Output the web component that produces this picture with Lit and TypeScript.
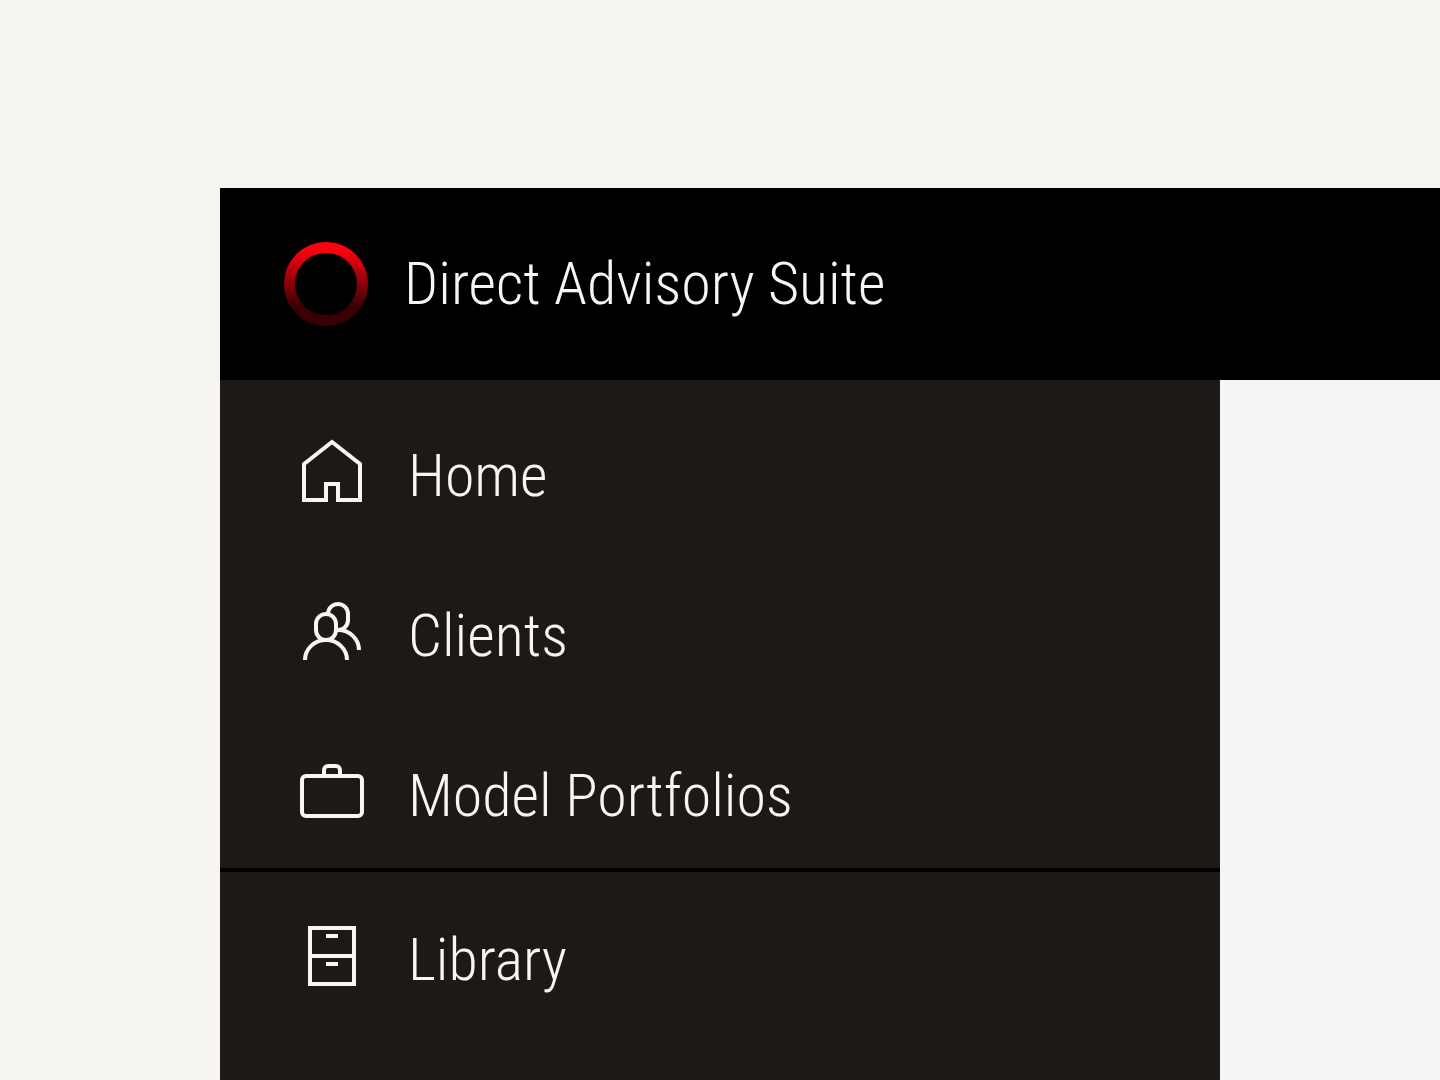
import { LitElement, html, svg, css } from "lit";
import { customElement } from "lit/decorators.js";

const icons = {
  home: svg`<path d="M12 32L40 10L68 32V68H46V52H34V68H12Z" />`,
  clients: svg`
    <rect x="24" y="22" width="20" height="26" rx="10" />
    <path d="M36 22A10 10 0 0 1 56 22V28A10 10 0 0 1 46 38H43" />
    <path d="M13 68A21 20 0 0 1 55 68" />
    <path d="M46 38A21 20 0 0 1 67 58" />`,
  portfolios: svg`
    <rect x="10" y="24" width="60" height="40" rx="4" />
    <path d="M32 24V18A4 4 0 0 1 36 14H44A4 4 0 0 1 48 18V24" />`,
  library: svg`
    <rect x="18" y="12" width="44" height="56" />
    <path d="M18 40H62M34 20H46M34 48H46" />`,
};

const groups = [
  [
    { label: "Home", icon: icons.home },
    { label: "Clients", icon: icons.clients },
    { label: "Model Portfolios", icon: icons.portfolios },
  ],
  [{ label: "Library", icon: icons.library }],
];

@customElement("app-root")
export class AppRoot extends LitElement {
  static styles = css`
    :host {
      display: flex;
      box-sizing: border-box;
      min-height: 100vh;
      padding: 188px 0 0 220px;
      background: #f6f5f1;
      color: #f7f6f2;
      font-family: "Roboto Condensed", "Liberation Sans Narrow",
        "Liberation Sans", sans-serif;
      font-size: 60px;
      line-height: 80px;
      font-weight: 300;
    }
    .app {
      flex: 1;
      min-width: 0;
      display: flex;
      flex-direction: column;
      background: #f5f5f5;
    }
    .masthead {
      display: flex;
      align-items: center;
      gap: 36px;
      padding: 54px 64px;
      background: #000;
    }
    .logo {
      flex: none;
      width: 84px;
      height: 84px;
    }
    .title {
      margin: 0;
      font-size: inherit;
      font-weight: inherit;
      white-space: nowrap;
    }
    .sidebar {
      flex: 1;
      box-sizing: border-box;
      width: 82%;
      padding-top: 8px;
      background: #1d1a15;
    }
    .group {
      display: grid;
      gap: 8px;
      margin: 0;
      padding: 8px 0 0;
      list-style: none;
    }
    .group + .group {
      border-top: 4px solid #000;
    }
    .link {
      display: flex;
      align-items: center;
      gap: 36px;
      padding: 36px 72px;
      color: inherit;
      text-decoration: none;
      white-space: nowrap;
    }
    .label {
      padding-top: 8px;
      line-height: 72px;
    }
    .icon {
      flex: none;
      width: 80px;
      height: 80px;
      fill: none;
      stroke: currentColor;
      stroke-width: 4;
    }
  `;

  render() {
    return html`
      <div class="app">
        <header class="masthead">
          <svg class="logo" viewBox="0 0 84 84" aria-hidden="true">
            <defs>
              <linearGradient id="ring" gradientUnits="userSpaceOnUse" x1="0" y1="8" x2="0" y2="65">
                <stop offset="0" stop-color="#ff0010" />
                <stop offset="1" stop-color="#380004" />
              </linearGradient>
            </defs>
            <circle cx="42" cy="42" r="36.5" fill="none" stroke="url(#ring)" stroke-width="11" />
          </svg>
          <h1 class="title">Direct Advisory Suite</h1>
        </header>
        <nav class="sidebar">
          ${groups.map(
            (group) => html`<ul class="group">
              ${group.map(
                (item) => html`<li>
                  <a class="link" href="#">
                    <svg class="icon" viewBox="0 0 80 80" aria-hidden="true">${item.icon}</svg>
                    <span class="label">${item.label}</span>
                  </a>
                </li>`
              )}
            </ul>`
          )}
        </nav>
      </div>
    `;
  }
}
